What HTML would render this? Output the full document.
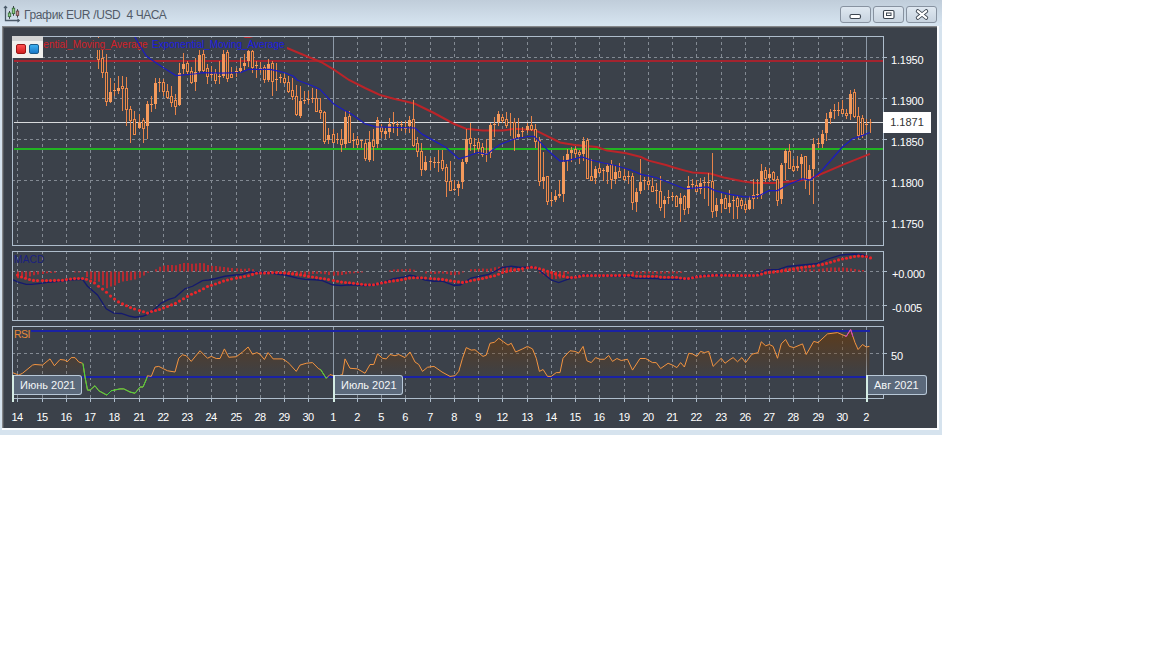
<!DOCTYPE html>
<html><head><meta charset="utf-8"><style>
html,body{margin:0;padding:0;background:#fff;width:1152px;height:648px;overflow:hidden;font-family:"Liberation Sans",sans-serif}
#win{position:absolute;left:0;top:0;width:942px;height:435px;background:#d6e3ee}
#title{position:absolute;left:0;top:0;width:942px;height:26px;background:linear-gradient(#c0cdda,#d7e5f1)}
#ttext{position:absolute;left:24px;top:7.5px;font-size:12px;color:#525b68;letter-spacing:-0.35px;white-space:pre}
.btn{position:absolute;top:6px;width:31px;height:17px;border:1px solid #8792a0;border-radius:3px;background:linear-gradient(#dfe8f1,#c7d3df);box-sizing:border-box}
#body{position:absolute;left:2px;top:26px;width:935px;height:402px;background:#3b414a;box-shadow:inset 1px 1px 0 #85878a, inset 2px 2px 0 #55595e}
#wstrip{position:absolute;left:937px;top:26px;width:2px;height:404px;background:#fbfdff}
#wstrip2{position:absolute;left:2px;top:428px;width:937px;height:2px;background:#fbfdff}
svg{position:absolute;left:0;top:0}
.ax{position:absolute;font-size:11px;color:#fff;white-space:pre;line-height:11px;letter-spacing:-0.2px}
.dl{position:absolute;width:30px;text-align:center;font-size:11px;color:#fff;line-height:11px;letter-spacing:-0.6px;text-indent:0.6px}
#legend{position:absolute;left:12px;top:36px;width:31px;height:22px;background:linear-gradient(#d3d3d3 0,#d3d3d3 5px,#f1f0ed 5px)}
#legend i{position:absolute;top:8px;width:10px;height:10px;border-radius:2px;box-sizing:border-box}
.lt{position:absolute;top:39px;font-size:10px;line-height:12px;white-space:pre}
.mlab{position:absolute;left:15px;top:375px;width:68px;height:20px;box-sizing:border-box;background:#5b697b;border:1px solid #b8c8d8;border-left:none;border-radius:0 3px 3px 0;color:#f4f6f8;font-size:11px;line-height:18px;padding-left:6px;white-space:pre}
</style></head><body>
<div id="win">
<div id="title"></div>
<svg width="24" height="24" style="left:0;top:0" viewBox="0 0 24 24">
<path d="M5.5 6.5V20.5H19" stroke="#4b5a68" stroke-width="1.3" fill="none"/>
<path d="M3.9 8.2L5.5 6.3L7.1 8.2M17.4 18.9L19.4 20.5L17.4 22.1" stroke="#4b5a68" stroke-width="1.1" fill="none"/>
<path d="M9.5 11V18.8M13.5 6V15.8M17.5 9.2V17.6" stroke="#3c4048" stroke-width="1"/>
<rect x="8.3" y="13" width="2.4" height="3.6" fill="#8fd080" stroke="#3d7040" stroke-width="0.9"/>
<rect x="12.3" y="8.2" width="2.4" height="5.4" fill="#8fd080" stroke="#3d7040" stroke-width="0.9"/>
<rect x="16.3" y="11.1" width="2.4" height="4.3" fill="#c09090" stroke="#6a4545" stroke-width="0.9"/>
</svg>
<div id="ttext">График EUR /USD  4 ЧАСА</div>
<div class="btn" style="left:840px"></div>
<div class="btn" style="left:873px"></div>
<div class="btn" style="left:906px"></div>
<svg width="100" height="24" style="left:840px;top:4px" viewBox="0 0 100 24">
<rect x="10" y="10.5" width="10.5" height="4" rx="1.5" fill="#fff" stroke="#3c4550" stroke-width="1.1"/>
<rect x="43.5" y="6.5" width="10.5" height="8" rx="1.2" fill="#fff" stroke="#3c4550" stroke-width="1.1"/>
<rect x="46.5" y="9" width="4.5" height="2.5" fill="none" stroke="#3c4550" stroke-width="1"/>
<path d="M77.8 7.2L86.2 13.8M86.2 7.2L77.8 13.8" stroke="#3c4550" stroke-width="4" stroke-linecap="round"/>
<path d="M77.8 7.2L86.2 13.8M86.2 7.2L77.8 13.8" stroke="#fff" stroke-width="2.2" stroke-linecap="round"/>
</svg>
<div id="body"></div>
<div id="wstrip"></div><div id="wstrip2"></div>
<svg width="942" height="435" viewBox="0 0 942 435">
<defs><clipPath id="cm"><rect x="13" y="37" width="870" height="208"/></clipPath><clipPath id="cd"><rect x="13" y="252" width="870" height="68"/></clipPath><clipPath id="cr"><rect x="13" y="327" width="870" height="71"/></clipPath><linearGradient id="rg" x1="0" y1="331" x2="0" y2="377" gradientUnits="userSpaceOnUse"><stop offset="0" stop-color="#703800" stop-opacity="0.62"/><stop offset="0.55" stop-color="#703800" stop-opacity="0.3"/><stop offset="1" stop-color="#703800" stop-opacity="0.04"/></linearGradient></defs>
<path d="M17.5 37.0V245.0M42.5 37.0V245.0M66.5 37.0V245.0M90.5 37.0V245.0M114.5 37.0V245.0M139.5 37.0V245.0M163.5 37.0V245.0M187.5 37.0V245.0M211.5 37.0V245.0M236.5 37.0V245.0M260.5 37.0V245.0M284.5 37.0V245.0M308.5 37.0V245.0M357.5 37.0V245.0M381.5 37.0V245.0M405.5 37.0V245.0M430.5 37.0V245.0M454.5 37.0V245.0M478.5 37.0V245.0M502.5 37.0V245.0M527.5 37.0V245.0M551.5 37.0V245.0M575.5 37.0V245.0M599.5 37.0V245.0M624.5 37.0V245.0M648.5 37.0V245.0M672.5 37.0V245.0M696.5 37.0V245.0M721.5 37.0V245.0M745.5 37.0V245.0M769.5 37.0V245.0M793.5 37.0V245.0M818.5 37.0V245.0M842.5 37.0V245.0" stroke="#838a93" stroke-dasharray="3 3" stroke-dashoffset="1" fill="none" shape-rendering="crispEdges"/>
<path d="M17.5 252.0V320.0M42.5 252.0V320.0M66.5 252.0V320.0M90.5 252.0V320.0M114.5 252.0V320.0M139.5 252.0V320.0M163.5 252.0V320.0M187.5 252.0V320.0M211.5 252.0V320.0M236.5 252.0V320.0M260.5 252.0V320.0M284.5 252.0V320.0M308.5 252.0V320.0M357.5 252.0V320.0M381.5 252.0V320.0M405.5 252.0V320.0M430.5 252.0V320.0M454.5 252.0V320.0M478.5 252.0V320.0M502.5 252.0V320.0M527.5 252.0V320.0M551.5 252.0V320.0M575.5 252.0V320.0M599.5 252.0V320.0M624.5 252.0V320.0M648.5 252.0V320.0M672.5 252.0V320.0M696.5 252.0V320.0M721.5 252.0V320.0M745.5 252.0V320.0M769.5 252.0V320.0M793.5 252.0V320.0M818.5 252.0V320.0M842.5 252.0V320.0" stroke="#838a93" stroke-dasharray="3 3" stroke-dashoffset="1" fill="none" shape-rendering="crispEdges"/>
<path d="M17.5 327.0V398.0M42.5 327.0V398.0M66.5 327.0V398.0M90.5 327.0V398.0M114.5 327.0V398.0M139.5 327.0V398.0M163.5 327.0V398.0M187.5 327.0V398.0M211.5 327.0V398.0M236.5 327.0V398.0M260.5 327.0V398.0M284.5 327.0V398.0M308.5 327.0V398.0M357.5 327.0V398.0M381.5 327.0V398.0M405.5 327.0V398.0M430.5 327.0V398.0M454.5 327.0V398.0M478.5 327.0V398.0M502.5 327.0V398.0M527.5 327.0V398.0M551.5 327.0V398.0M575.5 327.0V398.0M599.5 327.0V398.0M624.5 327.0V398.0M648.5 327.0V398.0M672.5 327.0V398.0M696.5 327.0V398.0M721.5 327.0V398.0M745.5 327.0V398.0M769.5 327.0V398.0M793.5 327.0V398.0M818.5 327.0V398.0M842.5 327.0V398.0" stroke="#838a93" stroke-dasharray="3 3" stroke-dashoffset="4" fill="none" shape-rendering="crispEdges"/>
<path d="M13 57.5H883M13 98.5H883M13 139.5H883M13 180.5H883M13 221.5H883M13 271.5H883M13 305.5H883M13 353.5H883" stroke="#838a93" stroke-dasharray="3 3" stroke-dashoffset="1" fill="none" shape-rendering="crispEdges"/>
<path d="M333.5 36.5V245.5M866.5 36.5V245.5M333.5 251.5V320.5M866.5 251.5V320.5M333.5 326.5V398.5M866.5 326.5V398.5" stroke="#8e9aa8" fill="none" shape-rendering="crispEdges"/>
<g clip-path="url(#cm)">
<line x1="13.5" y1="61" x2="883.5" y2="61" stroke="#a3242f" stroke-width="2" shape-rendering="crispEdges"/>
<line x1="13.5" y1="149" x2="883.5" y2="149" stroke="#22b522" stroke-width="2" shape-rendering="crispEdges"/>
<line x1="13.5" y1="122.5" x2="883.5" y2="122.5" stroke="#d8dadc" shape-rendering="crispEdges"/>
<polyline points="244.00,36.50 287.00,48.00 308.50,57.00 321.00,62.00 333.50,69.40 349.00,80.00 365.00,88.00 380.00,95.00 393.75,98.75 405.00,101.25 415.00,103.75 434.00,113.00 453.75,123.75 466.00,128.75 482.50,130.60 502.50,130.60 515.00,128.75 532.50,130.00 538.75,131.90 560.00,142.50 574.75,145.00 597.00,147.00 607.00,150.60 625.00,153.00 641.00,157.00 648.75,160.60 666.00,165.00 673.75,167.50 685.00,170.60 692.50,172.50 710.00,173.50 723.75,177.50 742.50,181.25 755.00,183.00 774.00,183.10 800.00,180.60 816.00,176.25 843.75,164.40 868.75,154.40 870.00,154.00" stroke="#bb2429" stroke-width="2" fill="none"/>
<path d="M98.5 37.0V69.0M102.5 50.0V77.5M106.5 54.0V105.6M110.5 77.5V102.5M114.5 83.0V96.0M118.5 75.6V94.0M122.5 76.0V110.6M126.5 77.0V125.6M130.5 106.0V142.5M134.5 111.0V135.0M139.5 114.0V129.0M143.5 118.0V142.5M147.5 101.0V139.0M151.5 96.0V112.0M155.5 78.0V109.0M159.5 78.0V92.0M163.5 79.0V95.6M167.5 84.0V99.0M171.5 86.0V107.0M175.5 94.0V115.0M179.5 63.0V106.0M183.5 52.5V73.8M187.5 60.6V73.8M191.5 67.0V84.0M195.5 58.0V90.6M199.5 50.0V72.5M203.5 50.0V72.5M207.5 64.0V84.0M211.5 66.0V77.5M215.5 69.0V84.0M219.5 61.0V84.0M223.5 50.0V77.5M227.5 50.0V82.0M231.5 67.0V78.0M236.5 68.0V77.0M240.5 57.5V73.0M244.5 54.0V70.0M248.5 50.0V67.0M252.5 50.0V73.0M256.5 60.6V77.5M260.5 62.0V72.5M264.5 65.0V82.5M268.5 59.0V82.0M272.5 61.0V96.0M276.5 63.0V90.6M280.5 74.0V83.0M284.5 74.0V84.0M288.5 76.0V92.5M292.5 78.0V100.0M296.5 85.0V116.0M300.5 86.0V117.5M304.5 91.0V104.0M308.5 90.6V104.0M312.5 88.0V102.5M316.5 89.0V112.0M320.5 97.5V119.0M324.5 110.6V144.0M328.5 128.0V144.0M333.5 129.0V142.5M337.5 133.0V144.0M341.5 129.0V152.0M345.5 111.0V147.5M349.5 111.0V142.5M353.5 133.0V147.5M357.5 136.0V147.5M361.5 140.0V148.0M365.5 139.0V161.0M369.5 131.0V162.0M373.5 129.0V161.0M377.5 117.0V147.5M381.5 124.0V137.5M385.5 128.0V139.0M389.5 118.0V138.0M393.5 112.0V132.5M397.5 120.6V136.0M401.5 121.0V131.0M405.5 120.6V133.0M409.5 115.6V133.0M413.5 100.0V147.0M417.5 137.0V157.0M421.5 143.0V175.6M425.5 156.0V170.6M430.5 157.5V170.0M434.5 157.0V167.5M438.5 150.0V172.0M442.5 150.0V170.6M446.5 164.0V197.0M450.5 160.6V191.0M454.5 180.0V191.0M458.5 181.0V195.6M462.5 159.0V189.0M466.5 129.0V164.0M470.5 123.0V151.0M474.5 138.0V152.5M478.5 138.0V154.0M482.5 143.0V157.0M486.5 139.0V162.0M490.5 123.0V158.0M494.5 117.0V137.0M498.5 111.0V126.0M502.5 114.0V122.5M506.5 112.0V128.0M510.5 113.0V135.6M514.5 118.0V151.0M518.5 118.0V139.0M522.5 127.0V137.0M527.5 123.0V133.0M531.5 116.0V130.6M535.5 124.0V147.5M539.5 137.0V186.0M543.5 152.0V189.0M547.5 175.6V205.0M551.5 192.0V205.6M555.5 190.0V202.0M559.5 180.0V198.0M563.5 156.0V202.0M567.5 149.0V170.6M571.5 147.0V162.0M575.5 145.6V158.0M579.5 150.0V164.0M583.5 137.0V161.0M587.5 138.0V178.0M591.5 159.0V181.0M595.5 166.0V184.0M599.5 164.0V174.0M603.5 168.0V180.6M607.5 164.0V184.0M611.5 160.0V189.0M615.5 166.0V184.0M619.5 163.0V178.0M624.5 168.0V181.0M628.5 171.0V184.0M632.5 172.5V210.0M636.5 188.0V212.0M640.5 159.0V194.0M644.5 176.5V189.5M648.5 176.0V190.0M652.5 178.0V192.0M656.5 183.0V204.0M660.5 176.0V211.0M664.5 195.6V218.0M668.5 190.0V204.0M672.5 192.0V201.0M676.5 195.0V206.0M680.5 193.0V222.0M684.5 195.0V215.0M688.5 175.6V214.0M692.5 179.0V189.0M696.5 179.5V191.5M700.5 178.0V194.0M704.5 177.0V199.0M708.5 172.5V205.6M712.5 153.0V218.0M716.5 198.0V217.0M721.5 194.0V212.5M725.5 195.0V209.0M729.5 190.0V212.5M733.5 195.6V219.0M737.5 196.0V219.0M741.5 198.0V209.0M745.5 201.0V212.5M749.5 195.6V210.0M753.5 179.0V209.0M757.5 179.0V199.0M761.5 164.0V199.0M765.5 167.0V182.0M769.5 168.0V181.0M773.5 171.0V180.6M777.5 176.0V206.0M781.5 162.5V204.0M785.5 149.0V180.0M789.5 144.0V169.0M793.5 159.0V172.0M797.5 156.0V170.6M801.5 154.0V180.0M805.5 155.6V189.0M809.5 165.0V195.0M813.5 138.0V204.0M818.5 138.0V147.5M822.5 130.0V147.5M826.5 113.0V141.0M830.5 109.0V124.0M834.5 104.0V119.0M838.5 102.0V115.6M842.5 100.0V114.0M846.5 109.0V119.0M850.5 90.0V120.0M854.5 89.0V117.5M858.5 107.0V139.0M862.5 115.0V137.5M866.5 119.0V130.0M870.5 119.0V132.5" stroke="#e8844a" fill="none" shape-rendering="crispEdges"/>
<g fill="#f49a5c" shape-rendering="crispEdges"><rect x="109" y="92" width="3" height="10"/><rect x="113" y="90" width="3" height="1"/><rect x="117" y="88" width="3" height="3"/><rect x="138" y="122" width="3" height="6"/><rect x="146" y="104" width="3" height="22"/><rect x="150" y="104" width="3" height="1"/><rect x="154" y="83" width="3" height="21"/><rect x="158" y="82" width="3" height="1"/><rect x="178" y="73" width="3" height="32"/><rect x="182" y="64" width="3" height="5"/><rect x="194" y="72" width="3" height="10"/><rect x="198" y="55" width="3" height="16"/><rect x="210" y="74" width="3" height="1"/><rect x="218" y="76" width="3" height="1"/><rect x="222" y="54" width="3" height="22"/><rect x="235" y="71" width="3" height="1"/><rect x="239" y="68" width="3" height="3"/><rect x="243" y="63" width="3" height="3"/><rect x="247" y="51" width="3" height="10"/><rect x="255" y="65" width="3" height="1"/><rect x="259" y="68" width="3" height="1"/><rect x="267" y="64" width="3" height="16"/><rect x="275" y="79" width="3" height="1"/><rect x="279" y="77" width="3" height="1"/><rect x="299" y="101" width="3" height="15"/><rect x="303" y="100" width="3" height="1"/><rect x="307" y="99" width="3" height="1"/><rect x="311" y="98" width="3" height="1"/><rect x="327" y="135" width="3" height="5"/><rect x="336" y="139" width="3" height="1"/><rect x="344" y="117" width="3" height="27"/><rect x="352" y="140" width="3" height="1"/><rect x="360" y="140" width="3" height="1"/><rect x="368" y="142" width="3" height="18"/><rect x="376" y="120" width="3" height="24"/><rect x="384" y="131" width="3" height="3"/><rect x="388" y="124" width="3" height="8"/><rect x="392" y="123" width="3" height="1"/><rect x="396" y="124" width="3" height="1"/><rect x="400" y="124" width="3" height="1"/><rect x="404" y="128" width="3" height="1"/><rect x="408" y="120" width="3" height="6"/><rect x="424" y="162" width="3" height="8"/><rect x="429" y="161" width="3" height="1"/><rect x="433" y="162" width="3" height="1"/><rect x="437" y="162" width="3" height="1"/><rect x="453" y="189" width="3" height="1"/><rect x="457" y="184" width="3" height="4"/><rect x="461" y="162" width="3" height="20"/><rect x="465" y="139" width="3" height="23"/><rect x="473" y="145" width="3" height="1"/><rect x="485" y="153" width="3" height="1"/><rect x="489" y="125" width="3" height="28"/><rect x="493" y="124" width="3" height="1"/><rect x="497" y="114" width="3" height="8"/><rect x="509" y="122" width="3" height="1"/><rect x="517" y="134" width="3" height="3"/><rect x="521" y="131" width="3" height="1"/><rect x="526" y="126" width="3" height="4"/><rect x="542" y="177" width="3" height="4"/><rect x="550" y="200" width="3" height="1"/><rect x="554" y="196" width="3" height="4"/><rect x="558" y="194" width="3" height="2"/><rect x="562" y="162" width="3" height="32"/><rect x="566" y="154" width="3" height="6"/><rect x="570" y="150" width="3" height="3"/><rect x="582" y="141" width="3" height="13"/><rect x="594" y="169" width="3" height="9"/><rect x="602" y="170" width="3" height="1"/><rect x="606" y="166" width="3" height="6"/><rect x="614" y="172" width="3" height="7"/><rect x="627" y="176" width="3" height="1"/><rect x="635" y="192" width="3" height="10"/><rect x="639" y="182" width="3" height="9"/><rect x="643" y="180" width="3" height="1"/><rect x="655" y="190" width="3" height="1"/><rect x="663" y="200" width="3" height="4"/><rect x="667" y="197" width="3" height="1"/><rect x="671" y="196" width="3" height="1"/><rect x="679" y="198" width="3" height="6"/><rect x="687" y="186" width="3" height="22"/><rect x="691" y="184" width="3" height="1"/><rect x="699" y="183" width="3" height="6"/><rect x="703" y="182" width="3" height="1"/><rect x="707" y="182" width="3" height="1"/><rect x="715" y="205" width="3" height="6"/><rect x="720" y="199" width="3" height="5"/><rect x="728" y="203" width="3" height="4"/><rect x="732" y="200" width="3" height="1"/><rect x="748" y="200" width="3" height="9"/><rect x="756" y="194" width="3" height="1"/><rect x="760" y="171" width="3" height="24"/><rect x="768" y="174" width="3" height="4"/><rect x="780" y="165" width="3" height="34"/><rect x="784" y="151" width="3" height="12"/><rect x="796" y="166" width="3" height="2"/><rect x="800" y="157" width="3" height="7"/><rect x="808" y="170" width="3" height="9"/><rect x="812" y="144" width="3" height="25"/><rect x="817" y="143" width="3" height="1"/><rect x="821" y="134" width="3" height="10"/><rect x="825" y="119" width="3" height="14"/><rect x="829" y="112" width="3" height="6"/><rect x="833" y="110" width="3" height="1"/><rect x="837" y="110" width="3" height="1"/><rect x="849" y="94" width="3" height="20"/><rect x="865" y="124" width="3" height="1"/><rect x="869" y="122" width="3" height="1"/></g>
<g fill="#3f3a38" stroke="#ec8a4c" shape-rendering="crispEdges"><rect x="97.5" y="47.5" width="2" height="12"/><rect x="101.5" y="58.5" width="2" height="14"/><rect x="105.5" y="72.5" width="2" height="29"/><rect x="121.5" y="86.5" width="2" height="2"/><rect x="125.5" y="88.5" width="2" height="21"/><rect x="129.5" y="109.5" width="2" height="11"/><rect x="133.5" y="119.5" width="2" height="15"/><rect x="142.5" y="120.5" width="2" height="8"/><rect x="162.5" y="82.5" width="2" height="9"/><rect x="166.5" y="91.5" width="2" height="6"/><rect x="170.5" y="96.5" width="2" height="6"/><rect x="174.5" y="100.5" width="2" height="6"/><rect x="186.5" y="63.5" width="2" height="8"/><rect x="190.5" y="71.5" width="2" height="11"/><rect x="202.5" y="54.5" width="2" height="16"/><rect x="206.5" y="68.5" width="2" height="8"/><rect x="214.5" y="73.5" width="2" height="7"/><rect x="226.5" y="52.5" width="2" height="26"/><rect x="230.5" y="74.5" width="2" height="3"/><rect x="251.5" y="51.5" width="2" height="16"/><rect x="263.5" y="67.5" width="2" height="12"/><rect x="271.5" y="63.5" width="2" height="18"/><rect x="283.5" y="78.5" width="2" height="4"/><rect x="287.5" y="82.5" width="2" height="9"/><rect x="291.5" y="90.5" width="2" height="6"/><rect x="295.5" y="96.5" width="2" height="18"/><rect x="315.5" y="98.5" width="2" height="13"/><rect x="319.5" y="110.5" width="2" height="2"/><rect x="323.5" y="112.5" width="2" height="29"/><rect x="332.5" y="134.5" width="2" height="8"/><rect x="340.5" y="139.5" width="2" height="5"/><rect x="348.5" y="116.5" width="2" height="26"/><rect x="356.5" y="139.5" width="2" height="5"/><rect x="364.5" y="143.5" width="2" height="15"/><rect x="372.5" y="140.5" width="2" height="6"/><rect x="380.5" y="127.5" width="2" height="4"/><rect x="412.5" y="119.5" width="2" height="26"/><rect x="416.5" y="143.5" width="2" height="8"/><rect x="420.5" y="151.5" width="2" height="18"/><rect x="441.5" y="160.5" width="2" height="8"/><rect x="445.5" y="167.5" width="2" height="14"/><rect x="449.5" y="181.5" width="2" height="9"/><rect x="469.5" y="138.5" width="2" height="5"/><rect x="477.5" y="142.5" width="2" height="6"/><rect x="481.5" y="147.5" width="2" height="7"/><rect x="501.5" y="117.5" width="2" height="3"/><rect x="505.5" y="119.5" width="2" height="6"/><rect x="513.5" y="122.5" width="2" height="16"/><rect x="530.5" y="125.5" width="2" height="4"/><rect x="534.5" y="129.5" width="2" height="12"/><rect x="538.5" y="140.5" width="2" height="41"/><rect x="546.5" y="176.5" width="2" height="25"/><rect x="574.5" y="149.5" width="2" height="4"/><rect x="578.5" y="152.5" width="2" height="2"/><rect x="586.5" y="140.5" width="2" height="38"/><rect x="590.5" y="176.5" width="2" height="4"/><rect x="598.5" y="168.5" width="2" height="4"/><rect x="610.5" y="164.5" width="2" height="15"/><rect x="618.5" y="171.5" width="2" height="6"/><rect x="623.5" y="176.5" width="2" height="3"/><rect x="631.5" y="176.5" width="2" height="26"/><rect x="647.5" y="181.5" width="2" height="3"/><rect x="651.5" y="186.5" width="2" height="5"/><rect x="659.5" y="191.5" width="2" height="16"/><rect x="675.5" y="196.5" width="2" height="10"/><rect x="683.5" y="196.5" width="2" height="13"/><rect x="695.5" y="185.5" width="2" height="6"/><rect x="711.5" y="181.5" width="2" height="30"/><rect x="724.5" y="198.5" width="2" height="10"/><rect x="736.5" y="198.5" width="2" height="8"/><rect x="740.5" y="200.5" width="2" height="5"/><rect x="744.5" y="204.5" width="2" height="5"/><rect x="752.5" y="195.5" width="2" height="3"/><rect x="764.5" y="170.5" width="2" height="8"/><rect x="772.5" y="172.5" width="2" height="7"/><rect x="776.5" y="179.5" width="2" height="21"/><rect x="788.5" y="151.5" width="2" height="17"/><rect x="792.5" y="166.5" width="2" height="4"/><rect x="804.5" y="156.5" width="2" height="23"/><rect x="841.5" y="109.5" width="2" height="4"/><rect x="845.5" y="113.5" width="2" height="2"/><rect x="853.5" y="92.5" width="2" height="24"/><rect x="857.5" y="116.5" width="2" height="19"/><rect x="861.5" y="118.5" width="2" height="16"/></g>
</g>
<g clip-path="url(#cd)">
<path d="M18 271.5V278.2M22 271.5V277.5M26 271.5V277.4M30 271.5V276.4M34 271.5V275.3M38 271.5V274.6M43 271.5V274.0M47 271.5V273.3M51 271.5V273.0M55 271.5V272.7M75 271.5V272.6M79 271.5V272.5M87 271.5V277.1M91 271.5V279.2M95 271.5V281.0M99 271.5V281.8M103 271.5V285.3M107 271.5V288.2M111 271.5V286.6M115 271.5V285.6M119 271.5V283.0M123 271.5V281.5M127 271.5V280.9M131 271.5V280.3M135 271.5V279.6M140 271.5V277.7M144 271.5V275.6M148 271.5V272.8M156 269.3V271.5M160 266.7V271.5M164 265.4V271.5M168 265.0V271.5M172 265.1V271.5M176 265.2V271.5M180 264.0V271.5M184 262.9V271.5M188 263.0V271.5M192 263.8V271.5M196 263.5V271.5M200 263.0V271.5M204 263.3V271.5M208 265.1V271.5M212 265.7V271.5M216 266.1V271.5M220 266.5V271.5M224 267.0V271.5M228 267.5V271.5M232 267.9V271.5M237 268.3V271.5M241 268.7V271.5M245 268.7V271.5M249 268.2V271.5M253 269.3V271.5M277 271.5V272.9M281 271.5V273.3M285 271.5V273.4M289 271.5V273.9M293 271.5V274.4M297 271.5V275.0M301 271.5V275.2M305 271.5V275.2M309 271.5V274.6M313 271.5V274.1M317 271.5V273.8M321 271.5V273.7M325 271.5V274.2M329 271.5V275.1M334 271.5V275.8M338 271.5V275.4M342 271.5V275.0M346 271.5V274.2M350 271.5V273.5M354 271.5V273.2M358 271.5V272.9M362 271.5V272.6M390 270.4V271.5M394 269.5V271.5M398 269.2V271.5M402 269.3V271.5M406 269.3V271.5M410 268.8V271.5M414 269.7V271.5M426 271.5V273.5M431 271.5V273.8M435 271.5V273.9M439 271.5V273.6M443 271.5V273.4M447 271.5V274.1M451 271.5V274.9M455 271.5V275.3M459 271.5V274.6M463 271.5V272.5M471 269.3V271.5M475 268.9V271.5M479 268.7V271.5M483 268.6V271.5M487 268.8V271.5M491 268.4V271.5M495 267.3V271.5M499 266.8V271.5M503 266.5V271.5M507 266.8V271.5M511 267.1V271.5M515 268.2V271.5M519 269.5V271.5M523 270.3V271.5M540 271.5V273.3M544 271.5V275.5M548 271.5V277.3M552 271.5V279.0M556 271.5V279.0M560 271.5V278.5M564 271.5V275.9M568 271.5V273.7M633 271.5V274.4M637 271.5V273.6M641 271.5V273.5M645 271.5V273.5M649 271.5V273.6M653 271.5V273.7M657 271.5V273.7M661 271.5V273.8M665 271.5V273.6M669 271.5V273.6M673 271.5V273.6M677 271.5V273.6M681 271.5V272.9M762 270.1V271.5M766 268.9V271.5M770 268.8V271.5M774 269.1V271.5M778 269.4V271.5M782 268.9V271.5M786 268.2V271.5M790 268.1V271.5M794 268.5V271.5M798 268.9V271.5M802 269.0V271.5M806 269.2V271.5M810 269.3V271.5M814 269.5V271.5M819 269.1V271.5M823 268.4V271.5M827 267.8V271.5M831 267.4V271.5M835 267.4V271.5M839 267.5V271.5M843 267.4V271.5M847 267.8V271.5M851 268.4V271.5M855 269.0V271.5M859 269.7V271.5M863 269.9V271.5" stroke="#b52a30" stroke-width="2" fill="none"/>
<polyline points="12.50,279.40 17.50,281.90 26.25,284.40 31.25,284.40 42.50,283.10 47.50,282.25 66.25,280.60 72.50,279.75 82.50,279.40 87.50,286.25 97.50,295.00 106.25,308.75 113.75,313.10 121.25,313.50 130.00,316.25 135.00,317.25 142.50,316.25 147.50,314.40 155.00,308.75 161.25,303.10 168.75,299.40 175.00,297.50 185.00,288.75 192.50,286.25 202.50,280.60 208.75,280.00 215.00,278.75 225.00,276.25 235.00,275.00 242.50,274.40 248.75,272.25 258.75,272.25 270.00,272.75 278.75,274.40 285.00,275.00 291.25,276.50 297.50,278.10 305.00,279.40 315.00,279.75 322.50,280.60 332.50,284.75 341.25,285.60 350.00,284.75 365.00,285.60 375.00,284.75 385.00,281.90 393.75,278.75 405.00,276.90 410.00,275.25 415.00,276.25 425.00,280.00 433.75,281.25 442.50,281.25 453.75,285.25 460.00,285.00 471.25,278.10 482.50,275.60 488.75,274.40 495.00,271.25 502.50,267.50 511.25,266.25 520.00,267.50 532.50,266.90 537.50,268.75 542.50,273.10 551.25,280.00 558.75,282.50 567.50,279.40 573.75,277.75 582.50,275.00 601.00,275.60 630.00,276.25 632.50,278.10 657.50,278.50 660.00,279.40 680.00,279.40 690.00,278.50 701.25,275.60 713.75,275.00 756.25,275.60 766.25,270.00 778.75,269.40 787.50,266.50 802.50,265.00 816.25,263.75 828.75,258.75 841.25,255.00 853.75,254.00 862.00,254.50 870.00,257.50" stroke="#14196e" stroke-width="1.3" fill="none"/>
<g fill="#e8262a"><circle cx="17.5" cy="275.1" r="1.55"/><circle cx="21.5" cy="277.0" r="1.55"/><circle cx="25.5" cy="278.3" r="1.55"/><circle cx="29.5" cy="279.5" r="1.55"/><circle cx="33.5" cy="280.4" r="1.55"/><circle cx="37.5" cy="280.6" r="1.55"/><circle cx="42.5" cy="280.6" r="1.55"/><circle cx="46.5" cy="280.6" r="1.55"/><circle cx="50.5" cy="280.5" r="1.55"/><circle cx="54.5" cy="280.4" r="1.55"/><circle cx="58.5" cy="280.3" r="1.55"/><circle cx="62.5" cy="280.2" r="1.55"/><circle cx="66.5" cy="279.6" r="1.55"/><circle cx="70.5" cy="279.0" r="1.55"/><circle cx="74.5" cy="278.6" r="1.55"/><circle cx="78.5" cy="278.5" r="1.55"/><circle cx="82.5" cy="278.5" r="1.55"/><circle cx="86.5" cy="279.3" r="1.55"/><circle cx="90.5" cy="281.1" r="1.55"/><circle cx="94.5" cy="282.9" r="1.55"/><circle cx="98.5" cy="286.3" r="1.55"/><circle cx="102.5" cy="289.1" r="1.55"/><circle cx="106.5" cy="292.2" r="1.55"/><circle cx="110.5" cy="296.1" r="1.55"/><circle cx="114.5" cy="299.0" r="1.55"/><circle cx="118.5" cy="301.9" r="1.55"/><circle cx="122.5" cy="303.9" r="1.55"/><circle cx="126.5" cy="305.8" r="1.55"/><circle cx="130.5" cy="307.5" r="1.55"/><circle cx="134.5" cy="309.0" r="1.55"/><circle cx="139.5" cy="310.5" r="1.55"/><circle cx="143.5" cy="311.8" r="1.55"/><circle cx="147.5" cy="313.1" r="1.55"/><circle cx="151.5" cy="311.5" r="1.55"/><circle cx="155.5" cy="310.5" r="1.55"/><circle cx="159.5" cy="309.5" r="1.55"/><circle cx="163.5" cy="308.0" r="1.55"/><circle cx="167.5" cy="306.5" r="1.55"/><circle cx="171.5" cy="304.9" r="1.55"/><circle cx="175.5" cy="303.4" r="1.55"/><circle cx="179.5" cy="301.1" r="1.55"/><circle cx="183.5" cy="298.7" r="1.55"/><circle cx="187.5" cy="296.4" r="1.55"/><circle cx="191.5" cy="294.3" r="1.55"/><circle cx="195.5" cy="292.6" r="1.55"/><circle cx="199.5" cy="290.8" r="1.55"/><circle cx="203.5" cy="288.7" r="1.55"/><circle cx="207.5" cy="286.5" r="1.55"/><circle cx="211.5" cy="285.2" r="1.55"/><circle cx="215.5" cy="284.0" r="1.55"/><circle cx="219.5" cy="282.6" r="1.55"/><circle cx="223.5" cy="281.1" r="1.55"/><circle cx="227.5" cy="280.0" r="1.55"/><circle cx="231.5" cy="279.0" r="1.55"/><circle cx="236.5" cy="278.1" r="1.55"/><circle cx="240.5" cy="277.4" r="1.55"/><circle cx="244.5" cy="276.5" r="1.55"/><circle cx="248.5" cy="275.7" r="1.55"/><circle cx="252.5" cy="274.4" r="1.55"/><circle cx="256.5" cy="273.2" r="1.55"/><circle cx="260.5" cy="273.1" r="1.55"/><circle cx="264.5" cy="273.1" r="1.55"/><circle cx="268.5" cy="272.9" r="1.55"/><circle cx="272.5" cy="272.6" r="1.55"/><circle cx="276.5" cy="272.6" r="1.55"/><circle cx="280.5" cy="272.7" r="1.55"/><circle cx="284.5" cy="273.1" r="1.55"/><circle cx="288.5" cy="273.5" r="1.55"/><circle cx="292.5" cy="273.9" r="1.55"/><circle cx="296.5" cy="274.4" r="1.55"/><circle cx="300.5" cy="274.9" r="1.55"/><circle cx="304.5" cy="275.6" r="1.55"/><circle cx="308.5" cy="276.4" r="1.55"/><circle cx="312.5" cy="277.0" r="1.55"/><circle cx="316.5" cy="277.6" r="1.55"/><circle cx="320.5" cy="278.2" r="1.55"/><circle cx="324.5" cy="278.8" r="1.55"/><circle cx="328.5" cy="279.5" r="1.55"/><circle cx="333.5" cy="280.5" r="1.55"/><circle cx="337.5" cy="281.3" r="1.55"/><circle cx="341.5" cy="282.1" r="1.55"/><circle cx="345.5" cy="282.5" r="1.55"/><circle cx="349.5" cy="282.8" r="1.55"/><circle cx="353.5" cy="283.2" r="1.55"/><circle cx="357.5" cy="283.8" r="1.55"/><circle cx="361.5" cy="284.3" r="1.55"/><circle cx="365.5" cy="284.8" r="1.55"/><circle cx="369.5" cy="284.8" r="1.55"/><circle cx="373.5" cy="284.8" r="1.55"/><circle cx="377.5" cy="283.9" r="1.55"/><circle cx="381.5" cy="283.0" r="1.55"/><circle cx="385.5" cy="282.2" r="1.55"/><circle cx="389.5" cy="281.4" r="1.55"/><circle cx="393.5" cy="280.9" r="1.55"/><circle cx="397.5" cy="280.4" r="1.55"/><circle cx="401.5" cy="279.7" r="1.55"/><circle cx="405.5" cy="278.9" r="1.55"/><circle cx="409.5" cy="278.1" r="1.55"/><circle cx="413.5" cy="277.8" r="1.55"/><circle cx="417.5" cy="277.8" r="1.55"/><circle cx="421.5" cy="277.8" r="1.55"/><circle cx="425.5" cy="278.0" r="1.55"/><circle cx="430.5" cy="278.5" r="1.55"/><circle cx="434.5" cy="278.8" r="1.55"/><circle cx="438.5" cy="279.1" r="1.55"/><circle cx="442.5" cy="279.4" r="1.55"/><circle cx="446.5" cy="280.1" r="1.55"/><circle cx="450.5" cy="280.7" r="1.55"/><circle cx="454.5" cy="281.4" r="1.55"/><circle cx="458.5" cy="281.9" r="1.55"/><circle cx="462.5" cy="282.4" r="1.55"/><circle cx="466.5" cy="281.7" r="1.55"/><circle cx="470.5" cy="280.8" r="1.55"/><circle cx="474.5" cy="280.0" r="1.55"/><circle cx="478.5" cy="279.2" r="1.55"/><circle cx="482.5" cy="278.5" r="1.55"/><circle cx="486.5" cy="277.6" r="1.55"/><circle cx="490.5" cy="276.6" r="1.55"/><circle cx="494.5" cy="275.7" r="1.55"/><circle cx="498.5" cy="274.2" r="1.55"/><circle cx="502.5" cy="272.5" r="1.55"/><circle cx="506.5" cy="271.6" r="1.55"/><circle cx="510.5" cy="270.8" r="1.55"/><circle cx="514.5" cy="270.0" r="1.55"/><circle cx="518.5" cy="269.3" r="1.55"/><circle cx="522.5" cy="268.6" r="1.55"/><circle cx="527.5" cy="267.8" r="1.55"/><circle cx="531.5" cy="267.3" r="1.55"/><circle cx="535.5" cy="267.8" r="1.55"/><circle cx="539.5" cy="268.7" r="1.55"/><circle cx="543.5" cy="269.9" r="1.55"/><circle cx="547.5" cy="271.2" r="1.55"/><circle cx="551.5" cy="272.6" r="1.55"/><circle cx="555.5" cy="273.9" r="1.55"/><circle cx="559.5" cy="275.2" r="1.55"/><circle cx="563.5" cy="276.4" r="1.55"/><circle cx="567.5" cy="277.2" r="1.55"/><circle cx="571.5" cy="277.6" r="1.55"/><circle cx="575.5" cy="277.2" r="1.55"/><circle cx="579.5" cy="276.4" r="1.55"/><circle cx="583.5" cy="275.6" r="1.55"/><circle cx="587.5" cy="275.6" r="1.55"/><circle cx="591.5" cy="275.6" r="1.55"/><circle cx="595.5" cy="275.6" r="1.55"/><circle cx="599.5" cy="275.6" r="1.55"/><circle cx="603.5" cy="275.6" r="1.55"/><circle cx="607.5" cy="275.6" r="1.55"/><circle cx="611.5" cy="275.5" r="1.55"/><circle cx="615.5" cy="275.5" r="1.55"/><circle cx="619.5" cy="275.4" r="1.55"/><circle cx="624.5" cy="275.4" r="1.55"/><circle cx="628.5" cy="275.3" r="1.55"/><circle cx="632.5" cy="275.2" r="1.55"/><circle cx="636.5" cy="276.1" r="1.55"/><circle cx="640.5" cy="276.2" r="1.55"/><circle cx="644.5" cy="276.2" r="1.55"/><circle cx="648.5" cy="276.2" r="1.55"/><circle cx="652.5" cy="276.2" r="1.55"/><circle cx="656.5" cy="276.2" r="1.55"/><circle cx="660.5" cy="277.1" r="1.55"/><circle cx="664.5" cy="277.2" r="1.55"/><circle cx="668.5" cy="277.2" r="1.55"/><circle cx="672.5" cy="277.2" r="1.55"/><circle cx="676.5" cy="277.2" r="1.55"/><circle cx="680.5" cy="278.0" r="1.55"/><circle cx="684.5" cy="278.5" r="1.55"/><circle cx="688.5" cy="278.5" r="1.55"/><circle cx="692.5" cy="277.8" r="1.55"/><circle cx="696.5" cy="277.0" r="1.55"/><circle cx="700.5" cy="276.4" r="1.55"/><circle cx="704.5" cy="276.0" r="1.55"/><circle cx="708.5" cy="275.7" r="1.55"/><circle cx="712.5" cy="275.4" r="1.55"/><circle cx="716.5" cy="275.3" r="1.55"/><circle cx="721.5" cy="275.3" r="1.55"/><circle cx="725.5" cy="275.3" r="1.55"/><circle cx="729.5" cy="275.4" r="1.55"/><circle cx="733.5" cy="275.4" r="1.55"/><circle cx="737.5" cy="275.4" r="1.55"/><circle cx="741.5" cy="275.5" r="1.55"/><circle cx="745.5" cy="275.5" r="1.55"/><circle cx="749.5" cy="275.5" r="1.55"/><circle cx="753.5" cy="275.6" r="1.55"/><circle cx="757.5" cy="275.2" r="1.55"/><circle cx="761.5" cy="274.1" r="1.55"/><circle cx="765.5" cy="273.0" r="1.55"/><circle cx="769.5" cy="272.6" r="1.55"/><circle cx="773.5" cy="272.1" r="1.55"/><circle cx="777.5" cy="271.6" r="1.55"/><circle cx="781.5" cy="271.1" r="1.55"/><circle cx="785.5" cy="270.5" r="1.55"/><circle cx="789.5" cy="269.7" r="1.55"/><circle cx="793.5" cy="268.9" r="1.55"/><circle cx="797.5" cy="268.1" r="1.55"/><circle cx="801.5" cy="267.6" r="1.55"/><circle cx="805.5" cy="267.1" r="1.55"/><circle cx="809.5" cy="266.6" r="1.55"/><circle cx="813.5" cy="266.0" r="1.55"/><circle cx="818.5" cy="265.2" r="1.55"/><circle cx="822.5" cy="264.4" r="1.55"/><circle cx="826.5" cy="263.4" r="1.55"/><circle cx="830.5" cy="262.3" r="1.55"/><circle cx="834.5" cy="261.1" r="1.55"/><circle cx="838.5" cy="259.9" r="1.55"/><circle cx="842.5" cy="259.0" r="1.55"/><circle cx="846.5" cy="258.3" r="1.55"/><circle cx="850.5" cy="257.4" r="1.55"/><circle cx="854.5" cy="256.5" r="1.55"/><circle cx="858.5" cy="256.1" r="1.55"/><circle cx="862.5" cy="256.3" r="1.55"/><circle cx="866.5" cy="256.6" r="1.55"/><circle cx="870.5" cy="257.9" r="1.55"/></g>
</g>
<g clip-path="url(#cr)">
<polygon points="12.50,377.00 12.50,372.60 18.75,375.10 22.50,373.25 32.50,365.10 35.00,364.50 42.50,365.10 50.00,358.90 54.40,365.75 60.00,359.50 65.00,360.10 66.90,362.00 71.25,357.60 75.00,357.60 78.75,362.00 82.50,363.25 83.00,363.90 85.00,377.00 87.50,377.00 90.00,377.00 95.00,377.00 98.75,377.00 106.90,377.00 111.25,377.00 120.00,377.00 123.75,377.00 130.00,377.00 135.00,377.00 140.00,377.00 143.00,377.00 146.25,377.00 147.50,375.75 151.25,376.40 155.00,367.00 158.75,366.40 163.75,368.90 167.50,370.75 175.00,372.00 178.75,358.25 182.50,354.75 186.25,355.75 191.25,361.40 200.00,350.75 207.50,358.25 211.25,356.40 216.25,358.50 220.00,358.50 224.40,348.90 228.75,357.25 236.25,356.75 242.50,352.00 248.10,347.00 252.50,354.25 256.90,352.60 260.00,354.25 264.40,359.50 268.10,352.60 273.10,358.90 282.50,358.90 287.50,362.00 290.00,364.50 296.25,371.40 300.00,365.10 306.25,363.25 312.50,362.60 318.75,368.90 320.60,369.50 325.00,376.40 326.25,377.00 330.00,374.50 333.75,375.75 338.00,376.00 342.50,374.50 345.00,358.90 350.00,368.25 357.50,368.90 365.00,373.25 370.00,364.50 373.75,364.50 377.50,353.90 382.50,358.25 386.25,358.90 390.00,354.50 395.00,355.75 398.75,354.50 405.00,357.60 410.00,352.00 415.00,362.00 418.75,364.50 422.50,371.40 427.50,367.25 434.00,366.40 442.00,372.00 450.00,376.40 455.00,375.75 458.75,371.40 462.50,358.25 466.25,347.60 471.25,350.10 475.00,349.75 483.00,356.40 486.25,355.10 490.00,343.25 494.40,342.25 498.75,338.25 503.75,342.00 508.00,345.10 511.25,343.25 515.60,352.00 522.50,348.90 527.50,346.40 532.50,348.90 536.25,358.25 539.40,371.40 543.10,369.50 547.50,376.40 551.25,376.40 556.25,372.60 560.00,372.60 563.00,358.25 570.00,350.75 575.00,351.40 578.75,353.00 583.10,346.40 586.90,360.75 591.25,362.60 595.60,357.60 600.00,359.25 604.40,359.25 608.75,355.50 612.50,361.40 616.90,358.50 621.25,360.50 627.50,359.25 632.50,370.10 640.00,358.50 645.60,358.50 652.50,362.60 656.25,362.60 660.60,368.50 668.10,363.25 672.50,365.10 676.90,367.60 680.60,362.60 684.40,367.00 688.75,353.25 692.50,353.90 696.90,356.40 700.60,351.40 704.40,352.60 708.75,351.40 713.10,366.40 721.25,358.25 725.00,363.25 730.00,359.50 733.10,357.60 737.50,361.75 741.90,357.60 745.60,362.60 751.90,354.25 758.10,352.60 761.25,341.75 765.60,345.75 769.40,344.50 773.10,346.40 777.50,358.25 781.25,343.90 785.60,339.50 789.40,346.40 793.75,347.60 802.50,343.90 806.25,354.50 813.75,341.40 818.10,342.60 827.50,333.90 837.50,332.60 846.25,336.40 850.60,329.50 855.00,342.60 858.10,349.50 862.50,344.50 866.25,347.00 869.40,346.40 869.40,377.00" fill="url(#rg)"/>
<line x1="13.5" y1="331" x2="870" y2="331" stroke="#1a22a4" stroke-width="2" shape-rendering="crispEdges"/>
<line x1="13.5" y1="377" x2="870" y2="377" stroke="#1a22a4" stroke-width="2" shape-rendering="crispEdges"/>
<polyline points="12.50,372.60 18.75,375.10 22.50,373.25 32.50,365.10 35.00,364.50 42.50,365.10 50.00,358.90 54.40,365.75 60.00,359.50 65.00,360.10 66.90,362.00 71.25,357.60 75.00,357.60 78.75,362.00 82.50,363.25 83.00,363.90 85.00,377.00 87.50,390.10 90.00,390.10 95.00,385.75 98.75,390.75 106.90,395.10 111.25,390.75 120.00,388.90 123.75,388.90 130.00,392.00 135.00,393.25 140.00,387.00 143.00,387.00 146.25,379.50 147.50,375.75 151.25,376.40 155.00,367.00 158.75,366.40 163.75,368.90 167.50,370.75 175.00,372.00 178.75,358.25 182.50,354.75 186.25,355.75 191.25,361.40 200.00,350.75 207.50,358.25 211.25,356.40 216.25,358.50 220.00,358.50 224.40,348.90 228.75,357.25 236.25,356.75 242.50,352.00 248.10,347.00 252.50,354.25 256.90,352.60 260.00,354.25 264.40,359.50 268.10,352.60 273.10,358.90 282.50,358.90 287.50,362.00 290.00,364.50 296.25,371.40 300.00,365.10 306.25,363.25 312.50,362.60 318.75,368.90 320.60,369.50 325.00,376.40 326.25,378.25 330.00,374.50 333.75,375.75 338.00,376.00 342.50,374.50 345.00,358.90 350.00,368.25 357.50,368.90 365.00,373.25 370.00,364.50 373.75,364.50 377.50,353.90 382.50,358.25 386.25,358.90 390.00,354.50 395.00,355.75 398.75,354.50 405.00,357.60 410.00,352.00 415.00,362.00 418.75,364.50 422.50,371.40 427.50,367.25 434.00,366.40 442.00,372.00 450.00,376.40 455.00,375.75 458.75,371.40 462.50,358.25 466.25,347.60 471.25,350.10 475.00,349.75 483.00,356.40 486.25,355.10 490.00,343.25 494.40,342.25 498.75,338.25 503.75,342.00 508.00,345.10 511.25,343.25 515.60,352.00 522.50,348.90 527.50,346.40 532.50,348.90 536.25,358.25 539.40,371.40 543.10,369.50 547.50,376.40 551.25,376.40 556.25,372.60 560.00,372.60 563.00,358.25 570.00,350.75 575.00,351.40 578.75,353.00 583.10,346.40 586.90,360.75 591.25,362.60 595.60,357.60 600.00,359.25 604.40,359.25 608.75,355.50 612.50,361.40 616.90,358.50 621.25,360.50 627.50,359.25 632.50,370.10 640.00,358.50 645.60,358.50 652.50,362.60 656.25,362.60 660.60,368.50 668.10,363.25 672.50,365.10 676.90,367.60 680.60,362.60 684.40,367.00 688.75,353.25 692.50,353.90 696.90,356.40 700.60,351.40 704.40,352.60 708.75,351.40 713.10,366.40 721.25,358.25 725.00,363.25 730.00,359.50 733.10,357.60 737.50,361.75 741.90,357.60 745.60,362.60 751.90,354.25 758.10,352.60 761.25,341.75 765.60,345.75 769.40,344.50 773.10,346.40 777.50,358.25 781.25,343.90 785.60,339.50 789.40,346.40 793.75,347.60 802.50,343.90 806.25,354.50 813.75,341.40 818.10,342.60 827.50,333.90 837.50,332.60 846.25,336.40 850.60,329.50 855.00,342.60 858.10,349.50 862.50,344.50 866.25,347.00 869.40,346.40" stroke="#f39440" stroke-width="1" fill="none"/>
<clipPath id="low"><rect x="13" y="377" width="870" height="22"/><rect x="320" y="368" width="7" height="10"/><rect x="82" y="362" width="4" height="16"/></clipPath><clipPath id="high"><rect x="845" y="320" width="8" height="17"/></clipPath>
<polyline points="12.50,372.60 18.75,375.10 22.50,373.25 32.50,365.10 35.00,364.50 42.50,365.10 50.00,358.90 54.40,365.75 60.00,359.50 65.00,360.10 66.90,362.00 71.25,357.60 75.00,357.60 78.75,362.00 82.50,363.25 83.00,363.90 85.00,377.00 87.50,390.10 90.00,390.10 95.00,385.75 98.75,390.75 106.90,395.10 111.25,390.75 120.00,388.90 123.75,388.90 130.00,392.00 135.00,393.25 140.00,387.00 143.00,387.00 146.25,379.50 147.50,375.75 151.25,376.40 155.00,367.00 158.75,366.40 163.75,368.90 167.50,370.75 175.00,372.00 178.75,358.25 182.50,354.75 186.25,355.75 191.25,361.40 200.00,350.75 207.50,358.25 211.25,356.40 216.25,358.50 220.00,358.50 224.40,348.90 228.75,357.25 236.25,356.75 242.50,352.00 248.10,347.00 252.50,354.25 256.90,352.60 260.00,354.25 264.40,359.50 268.10,352.60 273.10,358.90 282.50,358.90 287.50,362.00 290.00,364.50 296.25,371.40 300.00,365.10 306.25,363.25 312.50,362.60 318.75,368.90 320.60,369.50 325.00,376.40 326.25,378.25 330.00,374.50 333.75,375.75 338.00,376.00 342.50,374.50 345.00,358.90 350.00,368.25 357.50,368.90 365.00,373.25 370.00,364.50 373.75,364.50 377.50,353.90 382.50,358.25 386.25,358.90 390.00,354.50 395.00,355.75 398.75,354.50 405.00,357.60 410.00,352.00 415.00,362.00 418.75,364.50 422.50,371.40 427.50,367.25 434.00,366.40 442.00,372.00 450.00,376.40 455.00,375.75 458.75,371.40 462.50,358.25 466.25,347.60 471.25,350.10 475.00,349.75 483.00,356.40 486.25,355.10 490.00,343.25 494.40,342.25 498.75,338.25 503.75,342.00 508.00,345.10 511.25,343.25 515.60,352.00 522.50,348.90 527.50,346.40 532.50,348.90 536.25,358.25 539.40,371.40 543.10,369.50 547.50,376.40 551.25,376.40 556.25,372.60 560.00,372.60 563.00,358.25 570.00,350.75 575.00,351.40 578.75,353.00 583.10,346.40 586.90,360.75 591.25,362.60 595.60,357.60 600.00,359.25 604.40,359.25 608.75,355.50 612.50,361.40 616.90,358.50 621.25,360.50 627.50,359.25 632.50,370.10 640.00,358.50 645.60,358.50 652.50,362.60 656.25,362.60 660.60,368.50 668.10,363.25 672.50,365.10 676.90,367.60 680.60,362.60 684.40,367.00 688.75,353.25 692.50,353.90 696.90,356.40 700.60,351.40 704.40,352.60 708.75,351.40 713.10,366.40 721.25,358.25 725.00,363.25 730.00,359.50 733.10,357.60 737.50,361.75 741.90,357.60 745.60,362.60 751.90,354.25 758.10,352.60 761.25,341.75 765.60,345.75 769.40,344.50 773.10,346.40 777.50,358.25 781.25,343.90 785.60,339.50 789.40,346.40 793.75,347.60 802.50,343.90 806.25,354.50 813.75,341.40 818.10,342.60 827.50,333.90 837.50,332.60 846.25,336.40 850.60,329.50 855.00,342.60 858.10,349.50 862.50,344.50 866.25,347.00 869.40,346.40" stroke="#d040d0" stroke-width="1" fill="none" clip-path="url(#high)"/>
<polyline points="12.50,372.60 18.75,375.10 22.50,373.25 32.50,365.10 35.00,364.50 42.50,365.10 50.00,358.90 54.40,365.75 60.00,359.50 65.00,360.10 66.90,362.00 71.25,357.60 75.00,357.60 78.75,362.00 82.50,363.25 83.00,363.90 85.00,377.00 87.50,390.10 90.00,390.10 95.00,385.75 98.75,390.75 106.90,395.10 111.25,390.75 120.00,388.90 123.75,388.90 130.00,392.00 135.00,393.25 140.00,387.00 143.00,387.00 146.25,379.50 147.50,375.75 151.25,376.40 155.00,367.00 158.75,366.40 163.75,368.90 167.50,370.75 175.00,372.00 178.75,358.25 182.50,354.75 186.25,355.75 191.25,361.40 200.00,350.75 207.50,358.25 211.25,356.40 216.25,358.50 220.00,358.50 224.40,348.90 228.75,357.25 236.25,356.75 242.50,352.00 248.10,347.00 252.50,354.25 256.90,352.60 260.00,354.25 264.40,359.50 268.10,352.60 273.10,358.90 282.50,358.90 287.50,362.00 290.00,364.50 296.25,371.40 300.00,365.10 306.25,363.25 312.50,362.60 318.75,368.90 320.60,369.50 325.00,376.40 326.25,378.25 330.00,374.50 333.75,375.75 338.00,376.00 342.50,374.50 345.00,358.90 350.00,368.25 357.50,368.90 365.00,373.25 370.00,364.50 373.75,364.50 377.50,353.90 382.50,358.25 386.25,358.90 390.00,354.50 395.00,355.75 398.75,354.50 405.00,357.60 410.00,352.00 415.00,362.00 418.75,364.50 422.50,371.40 427.50,367.25 434.00,366.40 442.00,372.00 450.00,376.40 455.00,375.75 458.75,371.40 462.50,358.25 466.25,347.60 471.25,350.10 475.00,349.75 483.00,356.40 486.25,355.10 490.00,343.25 494.40,342.25 498.75,338.25 503.75,342.00 508.00,345.10 511.25,343.25 515.60,352.00 522.50,348.90 527.50,346.40 532.50,348.90 536.25,358.25 539.40,371.40 543.10,369.50 547.50,376.40 551.25,376.40 556.25,372.60 560.00,372.60 563.00,358.25 570.00,350.75 575.00,351.40 578.75,353.00 583.10,346.40 586.90,360.75 591.25,362.60 595.60,357.60 600.00,359.25 604.40,359.25 608.75,355.50 612.50,361.40 616.90,358.50 621.25,360.50 627.50,359.25 632.50,370.10 640.00,358.50 645.60,358.50 652.50,362.60 656.25,362.60 660.60,368.50 668.10,363.25 672.50,365.10 676.90,367.60 680.60,362.60 684.40,367.00 688.75,353.25 692.50,353.90 696.90,356.40 700.60,351.40 704.40,352.60 708.75,351.40 713.10,366.40 721.25,358.25 725.00,363.25 730.00,359.50 733.10,357.60 737.50,361.75 741.90,357.60 745.60,362.60 751.90,354.25 758.10,352.60 761.25,341.75 765.60,345.75 769.40,344.50 773.10,346.40 777.50,358.25 781.25,343.90 785.60,339.50 789.40,346.40 793.75,347.60 802.50,343.90 806.25,354.50 813.75,341.40 818.10,342.60 827.50,333.90 837.50,332.60 846.25,336.40 850.60,329.50 855.00,342.60 858.10,349.50 862.50,344.50 866.25,347.00 869.40,346.40" stroke="#3cdc3c" stroke-width="1" fill="none" clip-path="url(#low)"/>
</g>
<rect x="12.5" y="36.5" width="871.0" height="209.0" fill="none" stroke="#aebdcc" shape-rendering="crispEdges"/>
<rect x="12.5" y="251.5" width="871.0" height="69.0" fill="none" stroke="#aebdcc" shape-rendering="crispEdges"/>
<rect x="12.5" y="326.5" width="871.0" height="72.0" fill="none" stroke="#aebdcc" shape-rendering="crispEdges"/>
<path d="M883.5 57.5H886.5M883.5 98.5H886.5M883.5 139.5H886.5M883.5 180.5H886.5M883.5 221.5H886.5M883.5 271.5H886.5M883.5 305.5H886.5M883.5 353.5H886.5M17.5 398.5V402M42.5 398.5V402M66.5 398.5V402M90.5 398.5V402M114.5 398.5V402M139.5 398.5V402M163.5 398.5V402M187.5 398.5V402M211.5 398.5V402M236.5 398.5V402M260.5 398.5V402M284.5 398.5V402M308.5 398.5V402M333.5 398.5V402M357.5 398.5V402M381.5 398.5V402M405.5 398.5V402M430.5 398.5V402M454.5 398.5V402M478.5 398.5V402M502.5 398.5V402M527.5 398.5V402M551.5 398.5V402M575.5 398.5V402M599.5 398.5V402M624.5 398.5V402M648.5 398.5V402M672.5 398.5V402M696.5 398.5V402M721.5 398.5V402M745.5 398.5V402M769.5 398.5V402M793.5 398.5V402M818.5 398.5V402M842.5 398.5V402M866.5 398.5V402" stroke="#aebdcc" fill="none" shape-rendering="crispEdges"/>
<rect x="12" y="375" width="2" height="27" fill="#d4ece4"/>
<rect x="333" y="375" width="2" height="27" fill="#d4ece4"/>
<rect x="866" y="375" width="2" height="27" fill="#d4ece4"/>
</svg>
<div style="position:absolute;left:13px;top:38px;width:274px;height:12px;background:#3b414a"></div>
<div class="lt" style="left:15px;color:#d42028">Exponential_Moving_Average</div>
<div class="lt" style="left:152px;color:#1c1ce0">Exponential_Moving_Average</div>
<svg width="942" height="435" viewBox="0 0 942 435"><defs><clipPath id="cm2"><rect x="13" y="37" width="870" height="208"/></clipPath></defs><polyline clip-path="url(#cm2)" points="134.70,36.50 140.00,46.00 146.40,56.00 150.00,58.75 165.00,68.75 176.00,75.60 196.00,73.75 202.50,72.75 221.00,73.00 241.00,72.50 248.00,69.40 270.00,69.40 276.00,70.60 284.75,72.75 293.50,76.25 297.00,80.00 313.50,86.25 320.00,89.40 333.75,104.00 343.75,110.00 351.00,113.75 365.00,123.75 376.00,126.90 415.00,128.00 422.50,134.40 433.75,140.60 446.00,147.50 458.75,158.75 467.50,156.25 478.00,152.50 487.00,154.40 492.50,150.00 500.00,144.50 515.00,138.75 530.00,136.25 534.00,136.25 540.00,141.90 547.50,150.00 560.00,161.00 567.50,160.60 582.00,156.90 591.00,160.00 603.50,163.00 613.50,165.00 631.00,170.00 641.00,174.40 656.00,177.50 672.00,183.75 685.00,188.75 707.50,186.90 715.00,190.60 730.00,194.40 745.00,196.90 757.50,196.60 768.75,190.60 777.50,190.60 787.50,185.00 802.50,178.75 810.00,180.00 820.00,172.50 830.00,161.25 842.50,147.00 852.50,138.75 858.75,136.90 870.00,132.50" stroke="#1c1cc0" stroke-width="1.25" fill="none"/></svg>
<div id="legend"><i style="left:4px;background:linear-gradient(#ff5050,#d02020);border:1px solid #9a1515"></i><i style="left:17px;background:linear-gradient(#3cb0f0,#1a78c8);border:1px solid #1a5a8a"></i></div>
<div style="position:absolute;left:14px;top:254px;font-size:10px;color:#1a2080;letter-spacing:0.3px">MACD</div>
<div style="position:absolute;left:13px;top:328.5px;font-size:10.5px;line-height:11px;letter-spacing:-0.6px;color:#e88a3a;background:#3b414a;padding:0 1.5px 0 1px">RSI</div>
<div class="mlab" style="left:14px">Июнь 2021</div>
<div class="mlab" style="left:335px">Июль 2021</div>
<div class="mlab" style="left:868px;width:59px">Авг 2021</div>
<div style="position:absolute;left:883px;top:112px;width:48px;height:21px;background:#fff;color:#333;font-size:11px;line-height:21px;text-align:center">1.1871</div>
<div class="ax" style="left:891px;top:55.0px">1.1950</div>
<div class="ax" style="left:891px;top:96.0px">1.1900</div>
<div class="ax" style="left:891px;top:137.0px">1.1850</div>
<div class="ax" style="left:891px;top:178.0px">1.1800</div>
<div class="ax" style="left:891px;top:219.0px">1.1750</div>
<div class="ax" style="left:892px;top:269px">+0.000</div>
<div class="ax" style="left:892px;top:303px">-0.005</div>
<div class="ax" style="left:891px;top:351px">50</div>
<div class="dl" style="left:1.7px;top:412px">14</div>
<div class="dl" style="left:26.7px;top:412px">15</div>
<div class="dl" style="left:50.7px;top:412px">16</div>
<div class="dl" style="left:74.7px;top:412px">17</div>
<div class="dl" style="left:98.7px;top:412px">18</div>
<div class="dl" style="left:123.7px;top:412px">21</div>
<div class="dl" style="left:147.7px;top:412px">22</div>
<div class="dl" style="left:171.7px;top:412px">23</div>
<div class="dl" style="left:195.7px;top:412px">24</div>
<div class="dl" style="left:220.7px;top:412px">25</div>
<div class="dl" style="left:244.7px;top:412px">28</div>
<div class="dl" style="left:268.7px;top:412px">29</div>
<div class="dl" style="left:292.7px;top:412px">30</div>
<div class="dl" style="left:317.7px;top:412px">1</div>
<div class="dl" style="left:341.7px;top:412px">2</div>
<div class="dl" style="left:365.7px;top:412px">5</div>
<div class="dl" style="left:389.7px;top:412px">6</div>
<div class="dl" style="left:414.7px;top:412px">7</div>
<div class="dl" style="left:438.7px;top:412px">8</div>
<div class="dl" style="left:462.7px;top:412px">9</div>
<div class="dl" style="left:486.7px;top:412px">12</div>
<div class="dl" style="left:511.7px;top:412px">13</div>
<div class="dl" style="left:535.7px;top:412px">14</div>
<div class="dl" style="left:559.7px;top:412px">15</div>
<div class="dl" style="left:583.7px;top:412px">16</div>
<div class="dl" style="left:608.7px;top:412px">19</div>
<div class="dl" style="left:632.7px;top:412px">20</div>
<div class="dl" style="left:656.7px;top:412px">21</div>
<div class="dl" style="left:680.7px;top:412px">22</div>
<div class="dl" style="left:705.7px;top:412px">23</div>
<div class="dl" style="left:729.7px;top:412px">26</div>
<div class="dl" style="left:753.7px;top:412px">27</div>
<div class="dl" style="left:777.7px;top:412px">28</div>
<div class="dl" style="left:802.7px;top:412px">29</div>
<div class="dl" style="left:826.7px;top:412px">30</div>
<div class="dl" style="left:850.7px;top:412px">2</div>
</div>
</body></html>
